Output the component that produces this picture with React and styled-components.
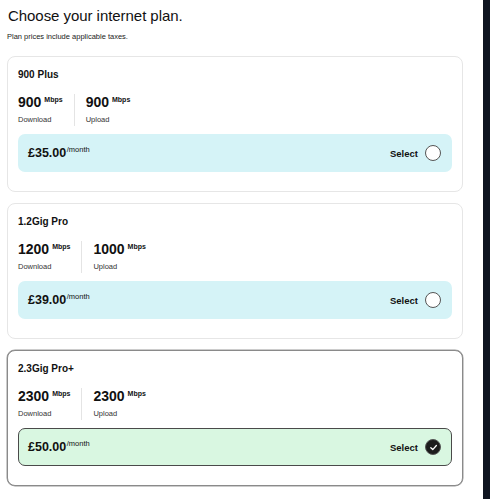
import React from "react";
import styled, { createGlobalStyle } from "styled-components";

const Global = createGlobalStyle`
  html, body { margin: 0; padding: 0; background: #fff; }
  body { font-family: "Liberation Sans", Arial, sans-serif; color: #111; }
  * { box-sizing: border-box; }
`;

const Shell = styled.div`
  display: flex;
  min-height: 100vh;
  width: 490px;
`;

const Main = styled.main`
  width: 483px;
  padding: 6px 20px 14px 7px;
  display: flex;
  flex-direction: column;
`;

const Strip = styled.div`
  width: 7px;
  background: #0f1521;
`;

const Title = styled.h1`
  margin: 0 0 0 1px;
  font-size: 15px;
  line-height: 20px;
  font-weight: 400;
  letter-spacing: -0.05px;
`;

const Subtitle = styled.p`
  margin: 6px 0 15px 0;
  font-size: 7.5px;
  line-height: 9px;
  color: #222;
`;

const Cards = styled.div`
  display: flex;
  flex-direction: column;
  gap: 11px;
`;

const Card = styled.div`
  border: 1px solid ${(p) => (p.$selected ? "#8a8a8a" : "#e6e6e6")};
  border-radius: 8px;
  padding: 12px 10px 19px 10px;
  background: #fff;
  box-shadow: ${(p) => (p.$selected ? "0 0 0 0.5px #9a9a9a" : "none")};
`;

const PlanName = styled.div`
  font-size: 10px;
  line-height: 12px;
  font-weight: 700;
`;

const Stats = styled.div`
  display: flex;
  margin-top: 13px;
`;

const Stat = styled.div`
  display: flex;
  flex-direction: column;
  padding-right: ${(p) => (p.$divider ? "11px" : "0")};
  margin-right: ${(p) => (p.$divider ? "11px" : "0")};
  border-right: ${(p) => (p.$divider ? "1px solid #e4e4e4" : "none")};
`;

const Speed = styled.div`
  display: flex;
  align-items: flex-start;
  gap: 3px;
  font-size: 14px;
  line-height: 16px;
  font-weight: 700;
`;

const Unit = styled.span`
  font-size: 7px;
  line-height: 9px;
  font-weight: 700;
  padding-top: 1px;
`;

const StatLabel = styled.div`
  margin-top: 4px;
  font-size: 7.5px;
  line-height: 12px;
  color: #333;
`;

const PriceBar = styled.div`
  margin-top: 8px;
  height: 38px;
  border-radius: 7px;
  background: ${(p) => (p.$selected ? "#d9f7e1" : "#d5f3f7")};
  border: ${(p) => (p.$selected ? "1px solid #4a4a4a" : "1px solid transparent")};
  display: flex;
  align-items: center;
  justify-content: space-between;
  padding: 0 10px 0 9px;
`;

const Price = styled.div`
  display: flex;
  align-items: flex-start;
  font-size: 12.5px;
  line-height: 15px;
  font-weight: 700;
`;

const Per = styled.span`
  font-size: 7.5px;
  line-height: 8px;
  font-weight: 400;
  margin-left: 0.5px;
`;

const SelectWrap = styled.div`
  display: flex;
  align-items: center;
  gap: 7px;
  font-size: 9.5px;
  font-weight: 700;
`;

const Radio = styled.span`
  width: 16px;
  height: 16px;
  border-radius: 50%;
  border: 1px solid #555;
  background: ${(p) => (p.$checked ? "#1c1c1c" : "#fff")};
  display: flex;
  align-items: center;
  justify-content: center;
`;

const plans = [
  { name: "900 Plus", down: "900", up: "900", price: "£35.00" },
  { name: "1.2Gig Pro", down: "1200", up: "1000", price: "£39.00" },
  { name: "2.3Gig Pro+", down: "2300", up: "2300", price: "£50.00", selected: true },
];

export default function App() {
  return (
    <>
      <Global />
      <Shell>
        <Main>
          <Title>Choose your internet plan.</Title>
          <Subtitle>Plan prices include applicable taxes.</Subtitle>
          <Cards>
            {plans.map((p) => (
              <Card key={p.name} $selected={p.selected}>
                <PlanName>{p.name}</PlanName>
                <Stats>
                  <Stat $divider>
                    <Speed>
                      {p.down}
                      <Unit>Mbps</Unit>
                    </Speed>
                    <StatLabel>Download</StatLabel>
                  </Stat>
                  <Stat>
                    <Speed>
                      {p.up}
                      <Unit>Mbps</Unit>
                    </Speed>
                    <StatLabel>Upload</StatLabel>
                  </Stat>
                </Stats>
                <PriceBar $selected={p.selected}>
                  <Price>
                    {p.price}
                    <Per>/month</Per>
                  </Price>
                  <SelectWrap>
                    Select
                    <Radio $checked={p.selected}>
                      {p.selected && (
                        <svg width="9" height="9" viewBox="0 0 10 10">
                          <path d="M2 5.2 L4.2 7.3 L8.2 2.8" fill="none" stroke="#fff" strokeWidth="1.4" strokeLinecap="round" strokeLinejoin="round" />
                        </svg>
                      )}
                    </Radio>
                  </SelectWrap>
                </PriceBar>
              </Card>
            ))}
          </Cards>
        </Main>
        <Strip />
      </Shell>
    </>
  );
}
